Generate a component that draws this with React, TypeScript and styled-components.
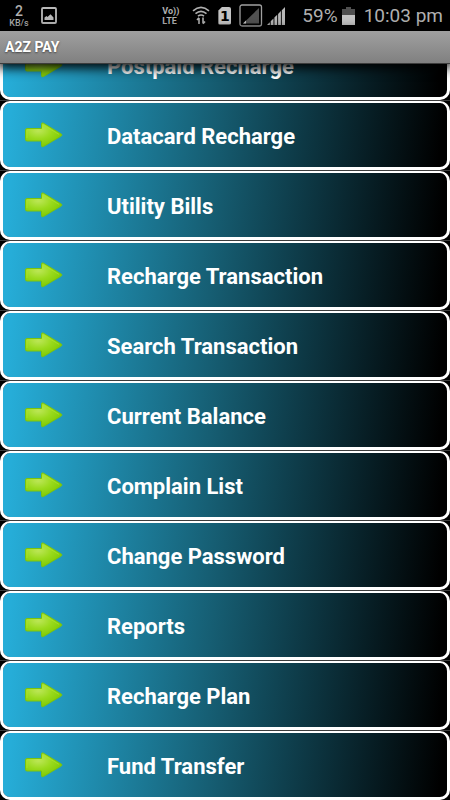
import React, { useLayoutEffect, useRef } from "react";
import styled, { createGlobalStyle } from "styled-components";

const GlobalStyle = createGlobalStyle`
  * { box-sizing: border-box; }
  body {
    margin: 0;
    background: #000;
    font-family: Roboto, "Liberation Sans", sans-serif;
  }
`;

const Screen = styled.div`
  display: flex;
  flex-direction: column;
  height: 100vh;
  background: #000;
`;

const StatusBar = styled.header`
  display: flex;
  flex: none;
  align-items: center;
  justify-content: space-between;
  height: 31px;
  padding: 0 7px 0 9px;
  background: #000;
  color: #b0b0b0;
`;

const StatusGroup = styled.div<{ $gap: number }>`
  display: flex;
  align-items: center;
  gap: ${({ $gap }) => $gap}px;
`;

const Speed = styled.div`
  display: flex;
  flex-direction: column;
  align-items: center;
  width: 20px;
  font-size: 9px;
  font-weight: 500;
  line-height: 10px;
`;

const SpeedValue = styled.span`
  font-size: 14px;
  line-height: 14px;
`;

const Volte = styled.div`
  display: flex;
  flex-direction: column;
  width: 18px;
  font-size: 9px;
  font-weight: 700;
  line-height: 10px;
`;

const StatusText = styled.span`
  font-size: 19px;
  line-height: 24px;
  white-space: nowrap;
`;

const TitleBar = styled.div`
  position: relative;
  z-index: 1;
  flex: none;
  height: 33px;
  padding: 0 5px;
  border-bottom: 1px solid #3c3c3c;
  background: linear-gradient(#a0a0a0, #808080);
  box-shadow: 0 2px 12px 2px #000;
`;

const Title = styled.h1`
  margin: 0;
  color: #fff;
  font-size: 14px;
  font-weight: 700;
  line-height: 33px;
  text-shadow: 0 1px 2px #444;
`;

const Menu = styled.ul`
  flex: 1;
  min-height: 0;
  margin: 0;
  padding: 0;
  overflow-y: auto;
  list-style: none;
  scrollbar-width: none;
`;

const MenuItem = styled.li`
  & + & {
    border-top: 1px solid #3c3c3c;
  }
`;

const MenuButton = styled.button`
  display: flex;
  align-items: center;
  gap: 43px;
  width: 100%;
  height: 69px;
  padding: 0 20px 0 21px;
  border: 3px solid #fff;
  border-top-width: 2px;
  border-radius: 10px;
  background: linear-gradient(97deg, #26add8 2%, #165e73 47%, #000 98%) padding-box;
  color: #fff;
  font: 700 22px/28px Roboto, "Liberation Sans", sans-serif;
  text-align: left;
  cursor: pointer;
`;

const Label = styled.span`
  padding-top: 3px;
`;

const Arrow = () => (
  <svg width="40" height="28" viewBox="0 1 40 28" aria-hidden="true">
    <defs>
      <radialGradient id="leaf" cx="0.35" cy="0.3" r="0.75">
        <stop offset="0" stopColor="#bfe75c" />
        <stop offset="0.5" stopColor="#99da1c" />
        <stop offset="1" stopColor="#7cc800" />
      </radialGradient>
    </defs>
    <path
      d="M3 8.5 Q1.5 8.5 1.5 10 V19.5 Q1.5 21 3 21 H17.5 V25.5 Q17.5 27.5 19.5 26.5 L37.5 15.8 Q38.5 15 37.5 14.2 L19.5 3.2 Q17.5 2.2 17.5 4.2 V8.5 Z"
      fill="url(#leaf)"
      stroke="#7cc40a"
    />
    <path
      d="M3 18 V10 H19 V4.8 L35 14.4"
      fill="none"
      stroke="#b4e838"
      strokeOpacity="0.5"
    />
  </svg>
);

const PictureIcon = () => (
  <svg width="16" height="17" viewBox="0 0 16 17" aria-hidden="true">
    <rect x="1" y="1" width="14" height="15" rx="1" fill="none" stroke="#b9b9b9" strokeWidth="1.8" />
    <path d="M3.5 13 V10.5 L5.5 9 L6.5 10 L9.5 7.2 L12.5 10.5 V13 Z" fill="#b9b9b9" />
  </svg>
);

const WifiIcon = () => (
  <svg width="18" height="19" viewBox="0 0 18 19" aria-hidden="true">
    <g fill="none" stroke="#b0b0b0" strokeWidth="1.6">
      <path d="M1 4.8 Q9 -2 17 4.8" />
      <path d="M3.5 7.6 Q9 3 14.5 7.6" />
      <path d="M6 10.2 Q9 7.8 12 10.2" />
    </g>
    <path
      d="M7 18 V12 M5 14 L7 11.7 M11 11.5 V17.5 M13 15.5 L11 17.8"
      fill="none"
      stroke="#b0b0b0"
      strokeWidth="1.6"
    />
  </svg>
);

const SimBadge = styled.span`
  width: 13px;
  height: 18px;
  border-radius: 2px;
  background: #c4c4c4;
  clip-path: polygon(4px 0, 100% 0, 100% 100%, 0 100%, 0 4px);
  color: #000;
  font-family: "DejaVu Sans", sans-serif;
  font-size: 14px;
  font-weight: 700;
  line-height: 18px;
  text-align: center;
`;

const EmptySignalIcon = () => (
  <svg width="24" height="23" viewBox="0 0 24 23" aria-hidden="true">
    <rect x="1" y="1" width="21.5" height="21" rx="2" fill="none" stroke="#a0a0a0" strokeWidth="1.3" />
    <path d="M4 19.5 L20 4 V19.5 Z" fill="#515151" />
    <path d="M4 19.5 L7 16.5 V19.5 Z" fill="#c4c4c4" />
  </svg>
);

const SignalIcon = () => (
  <svg width="18" height="18" viewBox="0 0 18 18" aria-hidden="true">
    <path
      d="M0 18 L2.8 15.2 V18 Z M3.7 18 V14.3 L6.5 11.5 V18 Z M7.4 18 V10.6 L10.2 7.8 V18 Z M11.1 18 V6.9 L13.9 4.1 V18 Z M14.8 18 V3.2 L18 0 V18 Z"
      fill="#b9b9b9"
    />
  </svg>
);

const BatteryIcon = () => (
  <svg width="13" height="18" viewBox="0 0 13 18" aria-hidden="true">
    <path d="M4 0 H9 V2 H13 V8 H0 V2 H4 Z" fill="#505050" />
    <path d="M0 8 H13 V18 H0 Z" fill="#c4c4c4" />
  </svg>
);

const items = [
  "Postpaid Recharge",
  "Datacard Recharge",
  "Utility Bills",
  "Recharge Transaction",
  "Search Transaction",
  "Current Balance",
  "Complain List",
  "Change Password",
  "Reports",
  "Recharge Plan",
  "Fund Transfer",
];

export default function App() {
  const menu = useRef<HTMLUListElement>(null);

  // Open the menu scrolled to its last entry.
  useLayoutEffect(() => {
    if (menu.current) menu.current.scrollTop = menu.current.scrollHeight;
  }, []);

  return (
    <>
      <GlobalStyle />
      <Screen>
        <StatusBar>
          <StatusGroup $gap={12}>
            <Speed>
              <SpeedValue>2</SpeedValue>
              <span>KB/s</span>
            </Speed>
            <PictureIcon />
          </StatusGroup>
          <StatusGroup $gap={9}>
            <StatusGroup $gap={17}>
              <StatusGroup $gap={4}>
                <StatusGroup $gap={8}>
                  <StatusGroup $gap={12}>
                    <Volte>
                      <span>Vo))</span>
                      <span>LTE</span>
                    </Volte>
                    <WifiIcon />
                  </StatusGroup>
                  <SimBadge>1</SimBadge>
                  <EmptySignalIcon />
                </StatusGroup>
                <SignalIcon />
              </StatusGroup>
              <StatusGroup $gap={4}>
                <StatusText>59%</StatusText>
                <BatteryIcon />
              </StatusGroup>
            </StatusGroup>
            <StatusText>10:03 pm</StatusText>
          </StatusGroup>
        </StatusBar>
        <TitleBar>
          <Title>A2Z PAY</Title>
        </TitleBar>
        <Menu ref={menu}>
          {items.map((item) => (
            <MenuItem key={item}>
              <MenuButton type="button">
                <Arrow />
                <Label>{item}</Label>
              </MenuButton>
            </MenuItem>
          ))}
        </Menu>
      </Screen>
    </>
  );
}
